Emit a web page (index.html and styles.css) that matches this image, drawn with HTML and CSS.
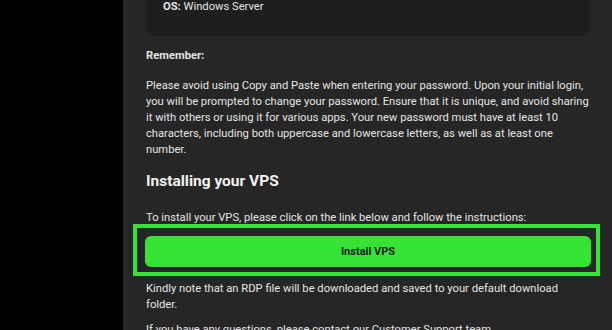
FILE: index.html
```html
<!DOCTYPE html>
<html lang="en">
<head>
  <meta charset="UTF-8">
  <meta name="viewport" content="width=device-width, initial-scale=1.0">
  <title>VPS details</title>
  <link rel="stylesheet" href="styles.css">
</head>
<body>
  <div class="side"></div>
  <main class="panel">
    <section class="details">
      <p><b>IP:</b> 192.168.10.24</p>
      <p><b>Username:</b> Administrator</p>
      <p><b>Password:</b> ••••••••••</p>
      <p><b>OS:</b> Windows Server</p>
    </section>

    <p class="label">Remember:</p>
    <p class="text">Please avoid using Copy and Paste when entering your password. Upon your initial login, you will be prompted to change your password. Ensure that it is unique, and avoid sharing it with others or using it for various apps. Your new password must have at least 10 characters, including both uppercase and lowercase letters, as well as at least one number.</p>

    <h2>Installing your VPS</h2>
    <p class="text">To install your VPS, please click on the link below and follow the instructions:</p>
    <div class="focus_ring">
      <button type="button" class="install">Install VPS</button>
    </div>
    <p class="text">Kindly note that an RDP file will be downloaded and saved to your default download folder.</p>
    <p class="text more">If you have any questions, please contact our Customer Support team.</p>
  </main>
</body>
</html>
```

FILE: styles.css
```css
*{
  margin:0;
  padding:0;
  box-sizing: border-box;
}
body{
  background-color: #000;
  display: flex;
  height: 330px;
  overflow: hidden;
  font-family: Roboto, "Liberation Sans", sans-serif;
  font-size: 11.2px;
  line-height: 16px;
  color: #e4e4e4;
}
.side{
  width: 123px;
  flex-shrink: 0;
}
.panel{
  flex: 1;
  background-color: #262626;
  padding: 0 20px 0 23px;
}
.details{
  margin: -65px 2px 0 0;
  background-color: #1e1e1e;
  border-radius: 10px;
  padding: 16px 17px 21px 17px;
}
.details b{
  font-weight: 700;
}
.label{
  font-weight: 700;
  margin-top: 12px;
}
.text{
  margin-top: 14px;
}
h2{
  font-size: 15.5px;
  line-height: 20px;
  font-weight: 700;
  color: #f2f2f2;
  margin-top: 13px;
}
h2 + .text{
  margin-top: 19px;
}
.focus_ring{
  margin: -2px -8px 0 -13px;
  border: 4px solid #35e335;
  padding: 8px 5px 5px 8px;
}
.install{
  display: block;
  width: 100%;
  height: 31px;
  border: none;
  border-radius: 6px;
  background-color: #35e335;
  color: #1a1a1a;
  font-family: Roboto, "Liberation Sans", sans-serif;
  font-size: 11px;
  font-weight: 700;
  cursor: pointer;
}
.focus_ring + .text{
  margin-top: 5px;
}
.more{
  margin-top: 9px;
}
```
